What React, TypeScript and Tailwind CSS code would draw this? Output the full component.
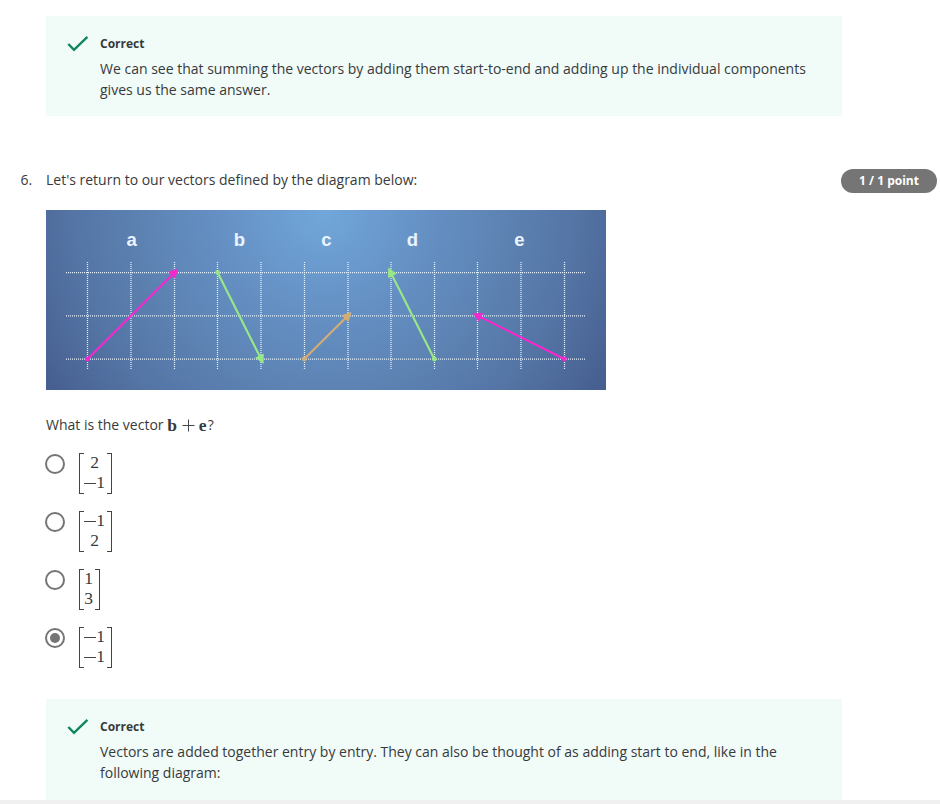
import React from 'react';

type VectorShape = {
  label: string;
  labelX: number;
  from: [number, number];
  to: [number, number];
  color: string;
};

const columns = [41.5, 85, 128.5, 171.5, 215, 258.5, 302, 345, 388.5, 431.5, 475, 518.5];
const rows = [62.5, 105.8, 149.2];

const vectors: VectorShape[] = [
  { label: 'a', labelX: 85.7, from: [41.5, 149], to: [128.5, 62.5], color: '#f528d0' },
  { label: 'b', labelX: 193.5, from: [171.6, 62.5], to: [215.2, 149.2], color: '#98e986' },
  { label: 'c', labelX: 280.5, from: [258.3, 149], to: [301.8, 105.8], color: '#d3ad74' },
  { label: 'd', labelX: 366.5, from: [388.3, 149], to: [344.6, 62.3], color: '#98e986' },
  { label: 'e', labelX: 473.5, from: [518.3, 149], to: [431.5, 105.6], color: '#f528d0' },
];

function Arrow({ from, to, color }: VectorShape) {
  const angle = (Math.atan2(to[1] - from[1], to[0] - from[0]) * 180) / Math.PI;
  return (
    <g fill={color} stroke="none">
      <line x1={from[0]} y1={from[1]} x2={to[0]} y2={to[1]} stroke={color} strokeWidth="2.1" />
      <circle cx={from[0]} cy={from[1]} r="2.4" />
      <path d="M5.3 0L-4 -4.9V4.9Z" transform={`translate(${to[0]} ${to[1]}) rotate(${angle})`} />
    </g>
  );
}

function Diagram() {
  return (
    <div className="h-[180px] w-[560px] bg-[radial-gradient(circle_at_278px_0px,#71a7da_0px,#6590c4_105px,#5c82b2_185px,#5475a5_250px,#465e90_330px)]">
      <svg width="560" height="180" viewBox="0 0 560 180" className="block">
        <g stroke="#e6f2fd" strokeWidth="1.25" strokeDasharray="1 1">
          {columns.map((x) => <line key={x} x1={x} x2={x} y1="52" y2="160" />)}
          {rows.map((y) => <line key={y} x1="20" x2="539.5" y1={y} y2={y} />)}
        </g>
        {vectors.map((v) => <Arrow key={v.label} {...v} />)}
        <g fill="#e9f4ff" textAnchor="middle" className="font-['Liberation_Sans',Arial,sans-serif] text-[18.5px] font-bold">
          {vectors.map((v) => <text key={v.label} x={v.labelX} y="36">{v.label}</text>)}
        </g>
      </svg>
    </div>
  );
}

function Feedback({ children, className }: { children: React.ReactNode; className: string }) {
  return (
    <section className={`ml-[46px] flex w-[796px] shrink-0 bg-[#f1fbf8] pl-[21px] ${className}`}>
      <svg width="22" height="22" viewBox="0 0 22 22" className="mt-[17px] mr-[11px] shrink-0">
        <path d="M1.3 11L7 16.8L20.4 3.8" fill="none" stroke="#0f875a" strokeWidth="2.4" />
      </svg>
      <div className="pt-[18px]">
        <h3 className="text-[12px] leading-5 font-bold">Correct</h3>
        <p className="mt-1 leading-[21px]">{children}</p>
      </div>
    </section>
  );
}

function Entry({ value }: { value: string }) {
  const negative = value.startsWith('-');
  return (
    <span className="flex h-5 items-center justify-center">
      {negative && <span className="mt-[3px] h-px w-[12px] bg-[#444]" />}
      <span className="w-[9px] text-center">{negative ? value.slice(1) : value}</span>
    </span>
  );
}

function Matrix({ entries }: { entries: [string, string] }) {
  return (
    <span className="flex h-[41px] font-['Liberation_Serif',serif] text-[17.5px] leading-5 text-[#373a3c]">
      <span className="w-[5px] border-y border-l border-[#444]" />
      <span className="-mt-px -ml-px flex flex-col pl-px pr-[2px]">
        {entries.map((value, i) => <Entry key={i} value={value} />)}
      </span>
      <span className="w-[5px] border-y border-r border-[#444]" />
    </span>
  );
}

function Plus() {
  return (
    <svg width="13" height="13" viewBox="0 0 13 13" className="mx-[4px] mt-[5px] shrink-0">
      <path d="M0.5 6.5H12.5M6.5 0.5V12.5" stroke="#44474a" strokeWidth="1" />
    </svg>
  );
}

const options: [string, string][] = [['2', '-1'], ['-1', '2'], ['1', '3'], ['-1', '-1']];

export default function App() {
  return (
    <main className="flex h-[804px] w-[940px] flex-col overflow-hidden bg-white pt-4 font-['Open_Sans','Noto_Sans',sans-serif] text-[14px] text-[#373a3c]">
      <Feedback className="h-[100px]">
        We can see that summing the vectors by adding them start-to-end and adding up the individual components
        <br />gives us the same answer.
      </Feedback>

      <div className="mt-[53px] flex h-6 shrink-0 pl-[20.5px]">
        <span className="w-[25.5px] leading-[22px]">6.</span>
        <p className="w-[795px] leading-[22px]">Let's return to our vectors defined by the diagram below:</p>
        <span className="h-6 w-24 rounded-full bg-[#757575] text-center text-[12px] leading-[23px] font-bold text-white">1 / 1 point</span>
      </div>

      <div className="mt-[17px] ml-[46px] shrink-0">
        <Diagram />
        <div className="mt-[24px] flex h-[22px] items-start leading-[22px]">
          <span className="whitespace-pre">What is the vector </span>
          <span className="flex items-start font-['Liberation_Serif',serif] text-[17.5px]"><b className="w-[10.5px]">b</b><Plus /><b className="w-[9px]">e</b></span>
          <span>?</span>
        </div>
        <div className="mt-[17px] flex flex-col gap-[17px]">
          {options.map((entries, i) => (
            <label key={i} className="-ml-px flex items-start">
              <span className="mt-px mr-[14px] flex size-5 items-center justify-center rounded-full border-2 border-[#757575]">
                {i === 3 && <span className="size-2.5 rounded-full bg-[#757575]" />}
              </span>
              <Matrix entries={entries} />
            </label>
          ))}
        </div>
      </div>

      <Feedback className="mt-[31px] h-[101px]">
        Vectors are added together entry by entry. They can also be thought of as adding start to end, like in the
        <br />following diagram:
      </Feedback>
      <div className="h-1 shrink-0 bg-[#f0f0f0]" />
    </main>
  );
}
